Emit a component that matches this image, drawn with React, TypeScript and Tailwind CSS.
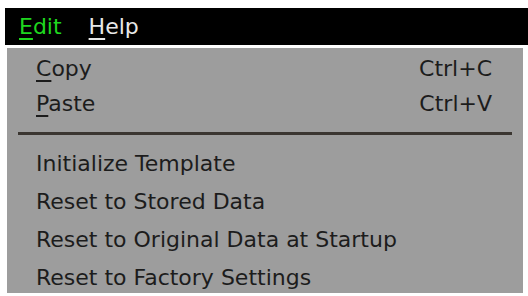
export default function App() {
  const actions = [
    "Initialize Template",
    "Reset to Stored Data",
    "Reset to Original Data at Startup",
    "Reset to Factory Settings",
  ];

  return (
    <div className="w-[528px] h-[296px] bg-white overflow-hidden pt-2 text-[22px] leading-none" style={{ fontFamily: '"DejaVu Sans", sans-serif' }}>
      {/* menu bar */}
      <div className="ml-[5px] h-[37px] bg-black flex items-center gap-[27px] pl-[14px]">
        <span className="text-[#1fd61f]"><span className="underline decoration-2 underline-offset-4">E</span>dit</span>
        <span className="text-[#e8e8e8]"><span className="underline decoration-2 underline-offset-4">H</span>elp</span>
      </div>

      {/* dropdown */}
      <div className="ml-[7px] mt-[3px] w-[516px] h-[245px] overflow-hidden bg-[#9d9d9d] text-[#1c1c1c] flex flex-col">
        <div className="shrink-0 h-[35px] mt-[3px] flex items-center justify-between pl-[29px] pr-[31px]">
          <span><span className="underline decoration-2 underline-offset-4">C</span>opy</span>
          <span>Ctrl+C</span>
        </div>
        <div className="shrink-0 h-[35px] flex items-center justify-between pl-[29px] pr-[31px]">
          <span><span className="underline decoration-2 underline-offset-4">P</span>aste</span>
          <span>Ctrl+V</span>
        </div>
        <div className="shrink-0 mx-[11px] mt-[11px] mb-[10px] h-[3px] bg-[#3b3631]" />
        {actions.map((a) => (
          <div key={a} className="shrink-0 h-[38px] flex items-center pl-[29px]">
            {a}
          </div>
        ))}
      </div>
    </div>
  );
}
